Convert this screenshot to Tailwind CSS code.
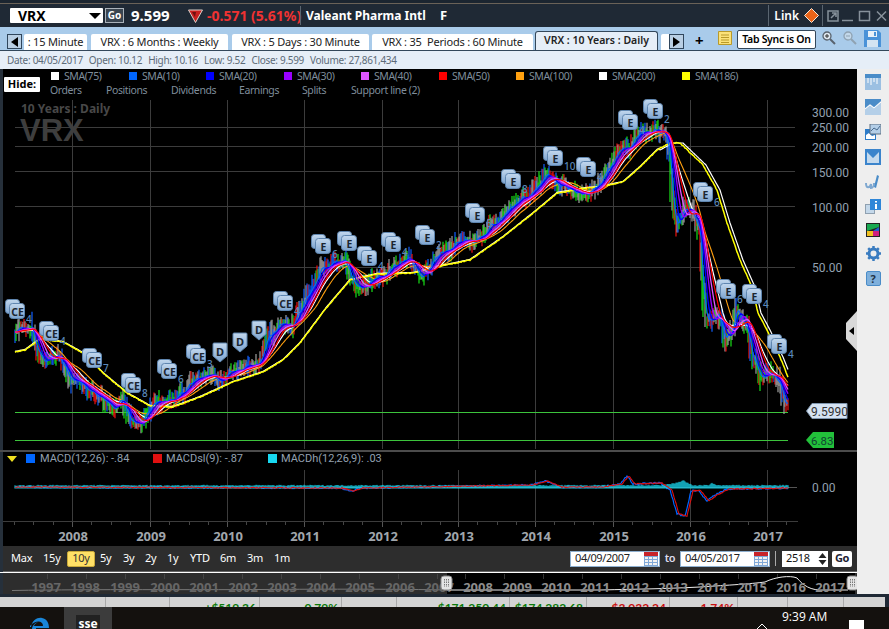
<!DOCTYPE html>
<html lang="en">
<head>
<meta charset="UTF-8">
<title>VRX Chart</title>
<script src="https://cdn.jsdelivr.net/npm/@tailwindcss/browser@4"></script>
</head>
<body class="bg-black">
<div class="w-[889px] h-[629px] overflow-hidden flex flex-col font-['Noto_Sans',sans-serif]">
  <!-- top strip -->
  <div class="h-[4px] bg-[#1b2530] border-b border-[#6a6258]"></div>

  <!-- quote header -->
  <div class="h-[23px] bg-[#1f2935] flex items-center text-white font-bold relative">
    <div class="ml-[10px] w-[93px] h-[15px] bg-white flex items-center justify-between pl-[8px] pr-[2px] text-black text-[14px] rounded-[1px]">
      <span>VRX</span>
      <span class="w-0 h-0 border-x-[6px] border-x-transparent border-t-[6px] border-t-black"></span>
    </div>
    <div class="ml-[2px] w-[19px] h-[15px] bg-[#3a4550] border border-[#aab2ba] text-[10px] flex items-center justify-center">Go</div>
    <span class="ml-[7px] text-[15px] w-[57px]">9.599</span>
    <svg class="w-[15px] h-[14px]" viewBox="0 0 15 14"><path d="M0.5 1h14L7.500 13.500z" fill="#c81f1f" stroke="#d9d0c8" stroke-width="1"/><path d="M4 3h4l-1 5z" fill="#6d1010"/></svg>
    <span class="ml-[4px] text-[14px] text-[#f03232] w-[93px] whitespace-nowrap">-0.571 (5.61%)</span>
    <span class="h-[19px] w-px bg-[#5a6570]"></span>
    <span class="ml-[5px] text-[12px] w-[134px] whitespace-nowrap">Valeant Pharma Intl</span>
    <span class="text-[13px]">F</span>
    <div class="ml-auto flex items-center h-full">
      <span class="h-[21px] w-px bg-[#5a6570]"></span>
      <span class="ml-[5px] text-[12px] font-semibold">Link</span>
      <svg class="ml-[5px] w-[15px] h-[15px]" viewBox="0 0 15 15"><path d="M7.500 .5l7 7-7 7-7-7z" fill="#e8641a" stroke="#f4e6d8"/></svg>
      <span class="ml-[3px] h-[21px] w-px bg-[#5a6570]"></span>
      <svg class="ml-[4px] mr-[2px] w-[60px] h-[12px]" viewBox="0 0 60 12" fill="none" stroke="#87919b" stroke-width="1.500">
        <path d="M1 1h10v10H1zM4 8l5-5M5 3h4v4"/>
        <path d="M15 10.500h11"/>
        <path d="M32.500 1.500h10v9h-10z"/>
        <path d="M50 1.500l9 9M59 1.500l-9 9"/>
      </svg>
    </div>
  </div>

  <!-- tabs -->
  <div class="h-[23px] bg-[#a9cbea] flex items-end relative text-[11px] tracking-[-0.2px] text-[#222] whitespace-nowrap">
    <div class="ml-[7px] mb-px w-[15px] h-[15px] bg-[#b9cfe4] border border-[#30465c] flex items-center justify-center">
      <span class="w-0 h-0 border-y-[5px] border-y-transparent border-r-[7px] border-r-black"></span>
    </div>
    <div class="ml-[2px] w-[63px] h-[16px] bg-white rounded-t-[2px] flex items-center justify-center">: 15 Minute</div>
    <div class="ml-[4px] w-[137px] h-[16px] bg-white rounded-t-[2px] flex items-center justify-center">VRX : 6 Months : Weekly</div>
    <div class="ml-[4px] w-[137px] h-[16px] bg-white rounded-t-[2px] flex items-center justify-center">VRX : 5 Days : 30 Minute</div>
    <div class="ml-[3px] w-[161px] h-[16px] bg-white rounded-t-[2px] flex items-center justify-center whitespace-pre">VRX : 35  Periods : 60 Minute</div>
    <div class="ml-[2px] w-[123px] h-[19px] bg-[#e6eef7] border border-b-0 border-[#33475a] rounded-t-[3px] flex items-center justify-center text-[10.500px] tracking-normal font-semibold">VRX : 10 Years : Daily</div>
    <div class="ml-[3px] w-[8px] h-[16px] bg-white rounded-tl-[2px]"></div>
    <div class="mb-px w-[15px] h-[15px] bg-[#b9cfe4] border border-[#30465c] flex items-center justify-center">
      <span class="w-0 h-0 border-y-[5px] border-y-transparent border-l-[7px] border-l-black"></span>
    </div>
    <span class="ml-[11px] mb-px w-[10px] text-[15px] leading-[18px] font-bold text-black">+</span>
    <svg class="absolute left-[718px] top-[4px] w-[14px] h-[14px]" viewBox="0 0 14 14"><path d="M.5.5h13v13H.5z" fill="#fbe27a" stroke="#b99a2a"/><path d="M3 4h8M3 6.500h8M3 9h8M3 11.500h8" stroke="#b99a2a"/></svg>
    <div class="absolute left-[737px] top-[3px] w-[79px] h-[19px] bg-white border border-[#33475a] rounded-[2px] flex items-center justify-center text-[10.500px] tracking-[-0.3px] font-semibold text-black">Tab Sync is On</div>
    <svg class="absolute left-[822px] top-[4px] w-[14px] h-[14px]" viewBox="0 0 14 14" fill="none"><circle cx="5" cy="5" r="4" fill="#dfe8f0" stroke="#58636e" stroke-width="1.300"/><path d="M8 8l5 5" stroke="#58636e" stroke-width="2"/><path d="M3 5h4M5 3v4" stroke="#333"/></svg>
    <svg class="absolute left-[843px] top-[4px] w-[14px] h-[14px]" viewBox="0 0 14 14" fill="none"><circle cx="5" cy="5" r="4" fill="#c3d8ea" stroke="#8fa2b2" stroke-width="1.300"/><path d="M8 8l5 5" stroke="#8fa2b2" stroke-width="2"/><path d="M3 5h4" stroke="#8fa2b2"/></svg>
    <svg class="absolute left-[864px] top-[3px] w-[17px] h-[17px]" viewBox="0 0 17 17"><path d="M0 0h14l3 3v14H0z" fill="#4a92d8"/><path d="M4 1h9v6H4z" fill="#e8f0f8"/><path d="M10 2h2v4h-2z" fill="#4a92d8"/><path d="M3 10h11v7H3z" fill="#d4e4f2"/></svg>
  </div>

  <!-- quote line -->
  <div class="h-[19px] bg-[#e6eef7] border-t border-[#33475a] flex items-center gap-[6px] pl-[7px] text-[10px] tracking-[-0.3px] text-[#5d6b78] whitespace-nowrap">
    <span>Date: 04/05/2017</span><span>Open: 10.12</span><span>High: 10.16</span><span>Low: 9.52</span><span>Close: 9.599</span><span>Volume: 27,861,434</span>
  </div>

  <div class="h-[525px] flex">
    <div class="w-[857px] flex flex-col bg-[#2d2d2d] border-l-[3px] border-[#26303b]">
      <!-- chart -->
      <div class="relative h-[477px] bg-black">
        <svg id="chart" class="absolute left-[-3px] top-0" width="857" height="477" viewBox="0 69 857 477"></svg>
        <div class="absolute left-[1px] top-[8px] w-[36px] h-[15px] bg-white rounded-[1px] flex items-center justify-center text-[11px] font-bold text-black">Hide:</div>
        <div id="legend" class="absolute left-[48px] top-0 flex text-[10.500px] tracking-[-0.4px] leading-[14px] text-[#7f8d9b] whitespace-nowrap">
          <div class="w-[78px] flex items-center gap-[5px]"><span class="w-[8px] h-[8px] bg-white"></span>SMA(75)</div>
          <div class="w-[77px] flex items-center gap-[5px]"><span class="w-[8px] h-[8px] bg-[#0066ff]"></span>SMA(10)</div>
          <div class="w-[78px] flex items-center gap-[5px]"><span class="w-[8px] h-[8px] bg-[#0000ff]"></span>SMA(20)</div>
          <div class="w-[77px] flex items-center gap-[5px]"><span class="w-[8px] h-[8px] bg-[#9900ff]"></span>SMA(30)</div>
          <div class="w-[78px] flex items-center gap-[5px]"><span class="w-[8px] h-[8px] bg-[#dd55ff]"></span>SMA(40)</div>
          <div class="w-[77px] flex items-center gap-[5px]"><span class="w-[8px] h-[8px] bg-[#ff0000]"></span>SMA(50)</div>
          <div class="w-[83px] flex items-center gap-[5px]"><span class="w-[8px] h-[8px] bg-[#ffa010]"></span>SMA(100)</div>
          <div class="w-[83px] flex items-center gap-[5px]"><span class="w-[8px] h-[8px] bg-white"></span>SMA(200)</div>
          <div class="flex items-center gap-[5px]"><span class="w-[8px] h-[8px] bg-[#ffff00]"></span>SMA(186)</div>
        </div>
        <div class="absolute left-[47px] top-[14px] flex text-[10.500px] tracking-[-0.4px] leading-[14px] text-[#7f8d9b] whitespace-nowrap">
          <span class="w-[56px]">Orders</span><span class="w-[65px]">Positions</span><span class="w-[68px]">Dividends</span><span class="w-[63px]">Earnings</span><span class="w-[49px]">Splits</span><span>Support line (2)</span>
        </div>
        <!-- collapse handle -->
        <div class="absolute left-[843px] top-[242px] w-[11px] h-[40px] bg-[#d8d8d8] [clip-path:polygon(100%_0,100%_100%,0_70%,0_30%)] flex items-center justify-center">
          <span class="w-0 h-0 border-y-[4px] border-y-transparent border-r-[5px] border-r-black"></span>
        </div>
      </div>

      <!-- range bar -->
      <div class="h-[25px] mt-px bg-[#2d2d2d] border-b border-[#666] flex items-center text-[11px] tracking-[-0.2px] text-white relative pb-px">
        <span class="ml-[8px] w-[32px]">Max</span><span class="w-[24px]">15y</span>
        <span class="w-[28px] h-[16px] bg-[#ffe066] border border-[#c9a93a] rounded-[2px] text-[#333] flex items-center justify-center">10y</span>
        <span class="ml-[5px] w-[23px]">5y</span><span class="w-[22px]">3y</span><span class="w-[22px]">2y</span><span class="w-[23px]">1y</span><span class="w-[30px]">YTD</span><span class="w-[27px]">6m</span><span class="w-[27px]">3m</span><span>1m</span>
        <div class="ml-auto mr-[5px] flex items-center tracking-[-0.4px]">
          <div class="w-[90px] h-[16px] bg-white border border-[#8fb0d0] flex items-center justify-between pl-[4px] pr-px text-[#222]">04/09/2007<svg class="w-[14px] h-[14px]" viewBox="0 0 14 14"><path d="M0 0h14v4H0z" fill="#c8242a"/><path d="M0 4h14v10H0z" fill="#7fa8d8"/><path d="M1 5h3v2H1zM5 5h3v2H5zM9 5h4v2H9zM1 8h3v2H1zM5 8h3v2H5zM9 8h4v2H9zM1 11h3v2H1zM5 11h3v2H5zM9 11h4v2H9z" fill="#f2f2f2"/></svg></div>
          <span class="w-[20px] text-center text-[#dde] font-semibold">to</span>
          <div class="w-[90px] h-[16px] bg-white border border-[#8fb0d0] flex items-center justify-between pl-[4px] pr-px text-[#222]">04/05/2017<svg class="w-[14px] h-[14px]" viewBox="0 0 14 14"><path d="M0 0h14v4H0z" fill="#c8242a"/><path d="M0 4h14v10H0z" fill="#7fa8d8"/><path d="M1 5h3v2H1zM5 5h3v2H5zM9 5h4v2H9zM1 8h3v2H1zM5 8h3v2H5zM9 8h4v2H9zM1 11h3v2H1zM5 11h3v2H5zM9 11h4v2H9z" fill="#f2f2f2"/></svg></div>
          <span class="ml-[5px] w-px h-[15px] bg-[#aaa]"></span>
          <div class="ml-[6px] w-[46px] h-[16px] bg-white flex items-center justify-between pl-[4px] pr-px text-[#111]">2518<svg class="w-[9px] h-[14px]" viewBox="0 0 9 14"><path d="M4.500 1L8.500 6H.5zM4.500 13L8.500 8H.5z" fill="#222"/></svg></div>
          <div class="ml-[4px] w-[20px] h-[16px] bg-white rounded-[2px] flex items-center justify-center font-bold text-[#223]">Go</div>
        </div>
      </div>

      <!-- navigator -->
      <div class="h-[22px] relative -ml-[3px] w-[857px] border-t border-white">
        <svg id="nav" class="absolute left-0 top-[-2px]" width="857" height="25" viewBox="0 570 857 25"></svg>
      </div>
    </div>

    <!-- right rail -->
    <div class="w-[32px] bg-[#eeeeee] flex flex-col items-center pt-[5px] gap-[9px]">
      <svg class="w-[16px] h-[16px]" viewBox="0 0 16 16"><path d="M0 0h16v16H0z" fill="#9cc0e2"/><path d="M0 0h16v4H0z" fill="#4a8cc8"/><path d="M3 4v5M6 4v7M9 4v4M12 4v6" stroke="#fff"/></svg>
      <svg class="w-[16px] h-[16px]" viewBox="0 0 16 16"><path d="M0 0h16v16H0z" fill="#b4cfe8"/><path d="M0 9l5-4 4 3 7-6V0H0z" fill="#4a8cc8"/><path d="M0 10l5-4 4 3 7-6" stroke="#fff" fill="none"/></svg>
      <svg class="w-[16px] h-[16px]" viewBox="0 0 16 16"><path d="M0 5h11v11H0z" fill="#2e7cc8"/><path d="M1 11l3-2 3 3 3-1v4H1z" fill="#fff"/><path d="M5 0h11v10H5z" fill="#b4cfe8" stroke="#5c6e80"/><path d="M6 7l3-3 3 2 3-4" stroke="#4a6c90" fill="none"/></svg>
      <svg class="w-[16px] h-[16px]" viewBox="0 0 16 16"><path d="M0 0h16v16H0z" fill="#3a84cc"/><path d="M2 3l6 6 6-6v11H2z" fill="#c4daee"/></svg>
      <svg class="w-[16px] h-[16px]" viewBox="0 0 16 16" fill="none" stroke="#7fa8d0" stroke-width="2"><path d="M1 9c0 6 4 5 5 1v4c2 0 3-3 3-5"/><path d="M12 1l2 1-3 12-2-1z" fill="#4a8cc8" stroke="none"/></svg>
      <svg class="w-[16px] h-[15px]" viewBox="0 0 16 15"><path d="M0 5h10v10H0z" fill="#8fa0b0"/><path d="M1 6h8v8H1z" fill="#c4d8ea"/><path d="M5 0h11v11H5z" fill="#2e86d8"/><path d="M10 2h2v1.500h-2zM10 5h2v5h-2z" fill="#fff"/></svg>
      <svg class="w-[14px] h-[14px]" viewBox="0 0 14 14"><path d="M0 0h14v14H0z" fill="#222"/><path d="M1 1h12v3L1 8z" fill="#18a850"/><path d="M13 4v4L7 8z" fill="#2060d0"/><path d="M1 8h6v5H1z" fill="#f0c020"/><path d="M7 8h6v5H7z" fill="#d02080"/></svg>
      <svg class="w-[15px] h-[15px]" viewBox="0 0 15 15"><circle cx="7.500" cy="7.500" r="4.500" fill="none" stroke="#3a7cc0" stroke-width="3"/><path d="M7.500 0v3M7.500 12v3M0 7.500h3M12 7.500h3M2.200 2.200l2 2M10.800 10.800l2 2M12.800 2.200l-2 2M4.200 10.800l-2 2" stroke="#3a7cc0" stroke-width="2.500"/></svg>
      <div class="mt-px w-[15px] h-[15px] bg-[#7fb0dc] border border-[#4a8cc8] rounded-[2px] text-[11px] leading-[13px] font-bold text-[#234] text-center">?</div>
    </div>
  </div>

  <div class="h-[3px] bg-[#1f2935]"></div>

  <!-- positions row, cut off by the taskbar -->
  <div class="h-[10px] bg-[#d4d4d4] flex overflow-hidden text-[12px] leading-[14px] font-bold whitespace-nowrap font-['Lato',sans-serif]">
    <div class="w-[106px] border-r border-[#aaa]"></div>
    <div class="w-[64px] border-r border-[#aaa]"></div>
    <div class="w-[90px] border-r border-[#aaa] text-right pr-[3px] pt-[4px] text-[#0a7a0a]">+$519.36</div>
    <div class="w-[82px] border-r border-[#aaa] text-right pr-[3px] pt-[4px] text-[#0a7a0a]">0.79%</div>
    <div class="w-[55px] border-r border-[#aaa]"></div>
    <div class="w-[113px] border-r border-[#aaa] text-right pr-[3px] pt-[4px] text-[#0a7a0a]">$171,250.44</div>
    <div class="w-[77px] border-r border-[#aaa] text-right pr-[3px] pt-[4px] text-[#0a7a0a]">$174,282.68</div>
    <div class="w-[83px] border-r border-[#aaa] text-right pr-[3px] pt-[4px] text-[#c81010]">$3,032.24</div>
    <div class="w-[68px] border-r border-[#aaa] text-right pr-[3px] pt-[4px] text-[#c81010]">1.74%</div>
    <div class="w-[50px] border-r border-[#aaa]"></div>
    <div class="w-[56px] border-r border-[#aaa]"></div>
    <div class="w-[41px]"></div>
    <div class="w-[4px] bg-[#1f2935]"></div>
  </div>

  <!-- taskbar -->
  <div class="h-[22px] bg-[#14110e] relative text-white overflow-hidden">
    <svg class="absolute left-[30px] top-[10px] w-[20px] h-[20px]" viewBox="0 0 20 20"><path d="M1 10C2 3 8 0 12 1c5 1 7 5 7 10H6c0 4 5 6 11 3v5c-7 3-15 0-15-7 0-3 3-6 6-7-2 1-4 3-4 4h9c0-5-7-7-14 1z" fill="#1a86d8"/></svg>
    <div class="absolute left-[64px] top-0 w-[48px] h-[22px] bg-[#3c3c3c]">
      <div class="absolute left-[12px] top-[8px] w-[24px] h-[20px] bg-[#222] text-[12px] font-bold leading-[18px] text-center">sse</div>
    </div>
    <svg class="absolute left-[755px] top-[16px] w-[14px] h-[7px]" viewBox="0 0 14 7" fill="none" stroke="#fff"><path d="M1 7l6-6 6 6"/></svg>
    <span class="absolute left-[782px] top-px text-[12px] leading-[18px] font-['Open_Sans',sans-serif]">9:39 AM</span>
    <div class="absolute left-[849px] top-[13px] w-[15px] h-[12px] bg-white"></div>
  </div>
</div>

<script>
// free canvas: all coordinates are page pixels
const NS = 'http://www.w3.org/2000/svg';
const chart = document.getElementById('chart');
const nav = document.getElementById('nav');
const FONT = "'Noto Sans', sans-serif";
const AXIS = "Roboto, sans-serif";

function add(parent, tag, attrs, text) {
  const el = document.createElementNS(NS, tag);
  for (const k in attrs) el.setAttribute(k, attrs[k]);
  if (text !== undefined) el.textContent = text;
  parent.appendChild(el);
  return el;
}

// linear interpolation of key points to one value per pixel column
function interp(pts, x0, x1) {
  const out = {};
  let j = 0;
  for (let x = x0; x <= x1; x++) {
    while (j < pts.length - 2 && pts[j + 1][0] < x) j++;
    const a = pts[j], b = pts[j + 1];
    const t = Math.min(1, Math.max(0, (x - a[0]) / (b[0] - a[0])));
    out[x] = a[1] + (b[1] - a[1]) * t;
  }
  return out;
}

let seed = 7;
function rnd() { seed = (seed * 16807) % 2147483647; return seed / 2147483647; }

const X0 = 15, X1 = 788;
const ribbon = [[15,340],[25,328],[37,327],[42,347],[50,358],[63,355],[77,382],[87,382],[100,393],[113,405],[128,403],[137,423],[147,422],[157,407],[167,398],[180,398],[197,380],[207,377],[227,377],[240,375],[253,365],[263,368],[273,343],[283,323],[297,322],[305,307],[320,280],[327,267],[350,262],[357,277],[367,290],[380,277],[403,263],[413,263],[427,273],[443,260],[463,243],[487,233],[503,220],[523,200],[537,197],[553,177],[570,185],[587,193],[600,187],[613,170],[627,150],[643,137],[660,130],[670,133],[675,157],[678,200],[682,223],[690,207],[698,213],[705,233],[708,290],[712,322],[723,313],[730,343],[737,332],[742,310],[753,327],[758,353],[767,377],[778,370],[785,383],[790,407]];
const base = interp(ribbon.map(p => [p[0] - 5, p[1]]), X0, X1);

// wandering daily price around the smooth path
const price = {};
let drift = 0;
for (let x = X0; x <= X1; x++) {
  drift = drift * 0.85 + (rnd() - 0.5) * 4;
  price[x] = base[x] + drift;
}

function sma(w, lead) {
  const out = {};
  for (let x = X0; x <= X1; x++) {
    let s = 0, n = 0;
    for (let k = x - w + 1 + lead; k <= x + lead; k++) {
      const q = Math.min(X1, Math.max(X0, k));
      s += price[q]; n++;
    }
    out[x] = s / n;
  }
  return out;
}

function line(series, color, width) {
  let d = '';
  for (let x = X0; x <= X1; x++) d += (d ? 'L' : 'M') + x + ' ' + series[x].toFixed(1);
  add(chart, 'path', { d, fill: 'none', stroke: color, 'stroke-width': width, 'stroke-linejoin': 'round' });
}

// grid
const yearX = [73, 151, 228, 305, 383, 459, 536, 614, 691, 768];
const yearLabels = [2008, 2009, 2010, 2011, 2012, 2013, 2014, 2015, 2016, 2017];
yearX.forEach(x => {
  add(chart, 'path', { d: `M${x - .5} 100V449M${x - .5} 470V521`, stroke: '#3c3c3c' });
});
[127, 146, 171, 206, 267].forEach(y => {
  add(chart, 'path', { d: `M15 ${y + .5}H795`, stroke: '#3c3c3c' });
});

// watermark
add(chart, 'text', { x: 21, y: 113, fill: '#484848', 'font-family': FONT, 'font-size': 12, 'font-weight': 700 }, '10 Years : Daily');
add(chart, 'text', { x: 20, y: 141, fill: '#3e3e3e', 'font-family': "'Liberation Sans', sans-serif", 'font-size': 31, 'font-weight': 700 }, 'VRX');

// support lines
add(chart, 'path', { d: 'M15 412.500H788M15 440.500H788', stroke: '#3cc43c' });

// bars
for (let x = X0; x <= X1; x++) {
  const r = rnd();
  const col = r < 0.32 ? '#a0a0a0' : r < 0.62 ? '#18e018' : r < 0.8 ? '#f01010' : '#1060ff';
  const steep = Math.abs(base[Math.min(X1, x + 1)] - base[x]);
  const spread = 5 + steep * 1.6;
  const lo = price[x] + 2 + rnd() * spread * 1.6;
  const hi = price[x] - 2 - rnd() * spread * 1.6;
  add(chart, 'path', { d: `M${x} ${hi.toFixed(1)}V${lo.toFixed(1)}`, stroke: col, 'stroke-width': 1.2 });
}

// moving averages, fast ribbon on top of the slow ones
const yellow = [[15,352],[25,350],[40,339],[63,342],[83,353],[103,373],[127,393],[150,406],[173,407],[200,397],[233,382],[263,372],[283,360],[300,343],[327,307],[350,280],[377,274],[413,273],[437,267],[470,260],[503,237],[537,210],[557,193],[587,188],[600,187],[623,182],[640,167],[657,150],[670,143],[680,143],[703,165],[717,190],[727,223],[740,260],[752,287],[758,313],[767,330],[780,357],[788,377]];
const yellowS = interp(yellow, X0, X1);
const whiteS = {};
for (let x = X0; x <= X1; x++) whiteS[x] = x < 660 ? yellowS[x] - .6 : yellowS[Math.max(X0, x - 3)];
for (let x = X0; x <= X1; x++) yellowS[x] += (rnd() - .5) * .9;
line(sma(34, 2), '#ffa010', 1.1);
line(sma(25, 2), '#ffffff', 1.2);
line(whiteS, '#ffffff', 1.2);
line(yellowS, '#ffff00', 1.5);
line(sma(3, 0), '#0066ff', 1.2);
line(sma(7, 0), '#0000ff', 1.4);
line(sma(11, 0), '#9900ff', 1.4);
line(sma(15, 0), '#dd55ff', 1.3);
line(sma(19, 0), '#ff0000', 1.2);

// earnings and dividend badges
const pills = [
  ['CE',18,312,'4'],['CE',52,334,'4'],['CE',95,361,'7'],['CE',134,386,'8'],['CE',170,372,'6'],['CE',199,357,'3'],
  ['D',220,353],['D',240,343],['D',259,331],['CE',286,304,'4'],
  ['E',324,247,'6'],['E',350,244],['E',370,259,'4'],['E',394,245,'4'],['E',428,238,'2'],['E',478,216,'6'],['E',514,182,'8'],
  ['E',556,159,'10'],['E',589,170,'4'],['E',631,123,'4'],['E',656,112,'2'],['E',706,195,'6'],['E',729,292,'6'],['E',755,297,'4'],['E',780,347,'4']
];
const tileFill = add(add(chart, 'defs', {}), 'linearGradient', { id: 'tile', x1: 0, y1: 0, x2: 0, y2: 1 });
add(tileFill, 'stop', { offset: 0, 'stop-color': '#c3d8ee' });
add(tileFill, 'stop', { offset: 1, 'stop-color': '#7ea5d0' });
pills.forEach(([t, x, y, n]) => {
  if (t === 'D') {
    add(chart, 'path', { d: `M${x - 7} ${y - 9}q0 -1 1 -1h12q1 0 1 1v12l-7 6l-7 -6z`, fill: 'url(#tile)', stroke: '#5f86b0' });
    add(chart, 'text', { x, y: y + 3, 'text-anchor': 'middle', fill: '#1c2630', 'font-family': FONT, 'font-size': 11, 'font-weight': 700 }, t);
    return;
  }
  add(chart, 'rect', { x: x - 12.5, y: y - 12.5, width: 14, height: 14, rx: 3, fill: 'url(#tile)', stroke: '#5f86b0' });
  add(chart, 'rect', { x: x - 8.5, y: y - 8.5, width: 15, height: 15, rx: 3, fill: 'url(#tile)', stroke: '#5f86b0' });
  add(chart, 'text', { x: x - .5, y: y + 3.5, 'text-anchor': 'middle', fill: '#1c2630', 'font-family': FONT, 'font-size': 10.5, 'font-weight': 700 }, t);
  if (n) add(chart, 'text', { x: x + 8, y: y + 11, fill: '#5a88bb', 'font-family': FONT, 'font-size': 10, 'font-weight': 500 }, n);
});

// price axis
[['300.00',112],['250.00',127],['200.00',147],['150.00',172],['100.00',207],['50.00',267]].forEach(([t, y]) => {
  add(chart, 'text', { x: 812, y: y + 4.5, fill: '#93a0b0', 'font-family': AXIS, 'font-size': 12 }, t);
});
add(chart, 'path', { d: 'M812 403.500H847V418.500H812L806.500 411z', fill: '#d5e3f3', stroke: '#7f96ae' });
add(chart, 'text', { x: 811, y: 415.500, fill: '#333', 'font-family': AXIS, 'font-size': 12 }, '9.5990');
add(chart, 'path', { d: 'M813 432H834V448H813L806 440z', fill: '#22c03a' });
add(chart, 'text', { x: 811, y: 444.500, fill: '#143', 'font-family': AXIS, 'font-size': 11.5 }, '6.83');

// MACD panel
add(chart, 'path', { d: 'M0 451H857', stroke: '#4c4c4c', 'stroke-width': 2 });
add(chart, 'path', { d: 'M7 456h10l-5 6z', fill: '#f0e020' });
[[26,'#0066ff','MACD(12,26): -.84',40],[153,'#e01010','MACDsl(9): -.87',166],[268,'#18d8f0','MACDh(12,26,9): .03',281]].forEach(([x, c, t, tx]) => {
  add(chart, 'rect', { x, y: 454, width: 9, height: 9, fill: c });
  add(chart, 'text', { x: tx, y: 462, fill: '#93a0b0', 'font-family': AXIS, 'font-size': 11 }, t);
});
add(chart, 'path', { d: 'M15 487.500H797', stroke: '#555' });
const macdKeys = [[15,487],[340,488],[352,491],[360,488],[530,485],[545,481],[560,487],[600,487],[620,484],[627,476],[633,484],[660,483],[670,490],[677,514],[685,516],[691,491],[698,490],[707,501],[715,495],[727,489],[788,488]];
const macd = interp(macdKeys, X0, X1);
function wobble(keys, shift, amp) {
  let d = '';
  for (let x = X0; x <= X1; x++) {
    const v = keys[Math.max(X0, x - shift)] + (rnd() - .5) * amp;
    d += (d ? 'L' : 'M') + x + ' ' + v.toFixed(1);
  }
  return d;
}
add(chart, 'path', { d: wobble(macd, 0, 1.6), fill: 'none', stroke: '#0066ff', 'stroke-width': 1.2 });
// histogram hugs the zero line, a bump where the fall starts
const histKeys = [[15,486],[660,486],[675,484],[683,481],[692,486],[708,486],[712,484],[718,486],[788,486]];
const hist = interp(histKeys, X0, X1);
for (let x = X0; x <= X1; x++) {
  const top = hist[x] - rnd() * 1.2;
  add(chart, 'path', { d: `M${x} ${top.toFixed(1)}V488.500`, stroke: '#18d8f0', 'stroke-width': 1 });
}
add(chart, 'path', { d: wobble(macd, 2, 1), fill: 'none', stroke: '#e01010', 'stroke-width': 1.1 });

add(chart, 'text', { x: 812, y: 492, fill: '#93a0b0', 'font-family': AXIS, 'font-size': 12 }, '0.00');

// time axis
add(chart, 'path', { d: 'M3 521.500H798', stroke: '#3c3c3c' });
yearX.forEach((x, i) => {
  add(chart, 'path', { d: `M${x - .5} 522V527`, stroke: '#555' });
  for (let q = 1; q < 4; q++) {
    const mx = Math.round(x + q * 19.3) - .5;
    if (mx < 798) add(chart, 'path', { d: `M${mx} 522V525`, stroke: '#444' });
    const px = Math.round(x - q * 19.3) - .5;
    if (i === 0 && px > 3) add(chart, 'path', { d: `M${px} 522V525`, stroke: '#444' });
  }
  add(chart, 'text', { x, y: 541, 'text-anchor': 'middle', fill: '#a0a6ac', 'font-family': FONT, 'font-size': 13, 'font-weight': 700 }, yearLabels[i]);
});

// navigator
add(nav, 'rect', { x: 447, y: 572, width: 408, height: 21, fill: '#000' });
for (let x = 26; x < 447; x += 39) add(nav, 'path', { d: `M${x + 21.5} 573V578`, stroke: '#444' });
for (let x = 447; x < 847; x += 39) add(nav, 'path', { d: `M${x + 18.5} 573V578`, stroke: '#333' });
add(nav, 'path', { d: 'M12 589.500C100 588 190 589 260 588.500S400 588 447 589', fill: 'none', stroke: '#777' });
const navLabels = [[1997,46],[1998,85],[1999,125],[2000,165],[2001,204],[2002,243],[2003,282],[2004,321],[2005,360],[2006,400],[2007,439]];
navLabels.forEach(([t, x]) => add(nav, 'text', { x, y: 591, 'text-anchor': 'middle', fill: '#666', 'font-family': FONT, 'font-size': 13, 'font-weight': 700 }, t));
add(nav, 'path', { d: 'M447 589H600C640 588 660 588 700 586C730 584 750 583 765 581C775 576 790 574 797 577C803 584 810 590 825 589H848', fill: 'none', stroke: '#eee', 'stroke-width': 1 });
[[2008,478],[2009,517],[2010,556],[2011,595],[2012,634],[2013,673],[2014,712],[2015,752],[2016,791],[2017,830]].forEach(([t, x]) => add(nav, 'text', { x, y: 591, 'text-anchor': 'middle', fill: '#8c8c8c', 'font-family': FONT, 'font-size': 13, 'font-weight': 700 }, t));
[441, 847].forEach(x => {
  add(nav, 'rect', { x, y: 575, width: 11, height: 14, rx: 3, fill: '#e4e4e4', stroke: '#888' });
  add(nav, 'path', { d: `M${x + 3.500} 578v8M${x + 5.500} 578v8M${x + 7.500} 578v8`, stroke: '#777', 'stroke-dasharray': '1.500 1' });
});
</script>
</body>
</html>
